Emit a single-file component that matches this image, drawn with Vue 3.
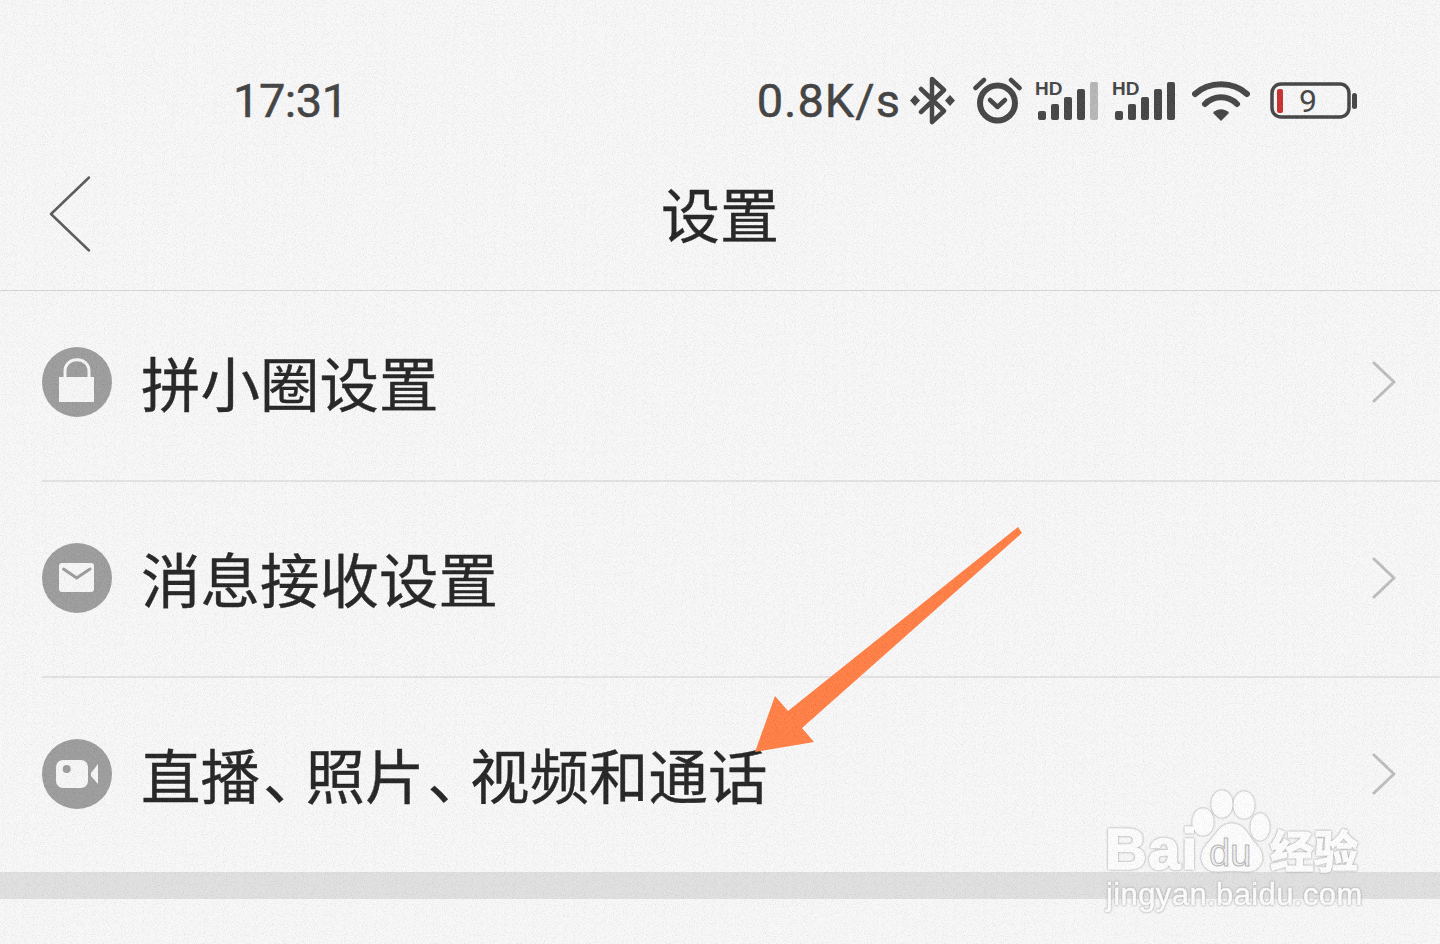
<script setup>
const signals = [
  { id: 'sig-1', weak: true },
  { id: 'sig-2', weak: false },
]
const bars = [
  { x: 3, h: 9 },
  { x: 16, h: 16 },
  { x: 29, h: 23 },
  { x: 42, h: 31 },
  { x: 55, h: 38 },
]
// the list label is split on the enumeration comma, which sits tighter than a full cell
const rows = [
  { id: 'circle', parts: ['拼小圈设置'] },
  { id: 'message', parts: ['消息接收设置'] },
  { id: 'live', parts: ['直播', '照片', '视频和通话'] },
]
</script>

<template>
  <div class="page">
    <div class="status">
      <span class="time">17:31</span>
      <div class="status-right">
        <span class="speed">0.8K/s</span>
        <svg class="ic-bt" width="45" height="49" viewBox="0 0 45 49">
          <path d="M11 13 L34 35 L22 46 V3 L34 14 L11 36" fill="none" stroke="#3e3e3e" stroke-width="4.5" stroke-linejoin="round" stroke-linecap="round" />
          <path d="M5 19 L10 24.500 L5 30 L0 24.500 Z M40 19 L45 24.500 L40 30 L35 24.500 Z" fill="#3e3e3e" />
        </svg>
        <svg class="ic-alarm" width="49" height="47" viewBox="0 0 49 47">
          <circle cx="24.500" cy="26" r="17.500" fill="none" stroke="#3e3e3e" stroke-width="6" />
          <path d="M17 23 L24.500 30 L32 23" fill="none" stroke="#3e3e3e" stroke-width="4.500" stroke-linecap="round" stroke-linejoin="round" />
          <path d="M2.500 11 L11 3 M38 3 L46.500 11" fill="none" stroke="#3e3e3e" stroke-width="4.500" stroke-linecap="round" />
        </svg>
        <svg v-for="s in signals" :key="s.id" class="ic-signal" width="64" height="40" viewBox="0 0 64 40">
          <text x="0" y="15" class="hd">HD</text>
          <rect
            v-for="(b, i) in bars"
            :key="i"
            :x="b.x"
            :y="40 - b.h"
            width="8"
            :height="b.h"
            rx="2"
            :fill="s.weak && i === 4 ? '#b4b4b4' : '#3e3e3e'"
          />
        </svg>
        <svg class="ic-wifi" width="58" height="41" viewBox="0 0 58 41">
          <path d="M3 14 C17 1 41 1 55 14" fill="none" stroke="#3e3e3e" stroke-width="6" stroke-linecap="round" />
          <path d="M13 24 C22 15 36 15 45 24" fill="none" stroke="#3e3e3e" stroke-width="6" stroke-linecap="round" />
          <path d="M21 33 C25 28 33 28 37 33 L29 41 Z" fill="#3e3e3e" />
        </svg>
        <svg class="ic-battery" width="87" height="37" viewBox="0 0 87 37">
          <rect x="2" y="2" width="77" height="33" rx="9" fill="none" stroke="#3e3e3e" stroke-width="3.500" />
          <rect x="7" y="7" width="6" height="24" rx="2" fill="#c62828" />
          <text x="29" y="30" class="batt">9</text>
          <rect x="82" y="11" width="5" height="16" rx="2.500" fill="#3e3e3e" />
        </svg>
      </div>
    </div>

    <header class="nav">
      <svg class="back" width="42" height="76" viewBox="0 0 42 76">
        <path d="M40 1.500 L2 38 L40 74.500" fill="none" stroke="#555" stroke-width="2.500" stroke-linecap="round" stroke-linejoin="round" />
      </svg>
      <h1 class="title">设置</h1>
      <span></span>
    </header>

    <ul class="list">
      <li v-for="row in rows" :key="row.id" class="row">
        <span class="badge">
          <svg v-if="row.id === 'circle'" width="70" height="70" viewBox="0 0 70 70">
            <path d="M23 32 V24 C23 9 47 9 47 24 V32" fill="none" stroke="#f6f6f6" stroke-width="3" />
            <rect x="17" y="30" width="35" height="25" fill="#f6f6f6" />
          </svg>
          <svg v-else-if="row.id === 'message'" width="70" height="70" viewBox="0 0 70 70">
            <rect x="17" y="20" width="35" height="29" rx="3" fill="#f6f6f6" />
            <path d="M21.500 26 L34.700 35 L48 26" fill="none" stroke="#999" stroke-width="3" stroke-linecap="round" />
          </svg>
          <svg v-else width="70" height="70" viewBox="0 0 70 70">
            <rect x="14" y="21" width="32" height="28" rx="7" fill="#f6f6f6" />
            <circle cx="24.700" cy="30" r="4" fill="#999" />
            <path d="M49 34 L56 25 V45 L49 37 Z" fill="#f6f6f6" />
          </svg>
        </span>
        <span class="label">
          <template v-for="(part, i) in row.parts" :key="i">
            <span v-if="i > 0" class="comma">、</span>{{ part }}
          </template>
        </span>
        <svg class="more" width="24" height="42" viewBox="0 0 24 42">
          <path d="M2 2 L22 21 L2 40" fill="none" stroke="#bbb" stroke-width="3" stroke-linecap="round" stroke-linejoin="round" />
        </svg>
      </li>
    </ul>

    <div class="band"></div>

    <svg class="arrow" width="1440" height="944" viewBox="0 0 1440 944">
      <polygon points="1018,527 1022,533 802,728 814,742 755,752 775,696 788,711" fill="#ff7a3d" />
    </svg>

    <svg class="mark" width="1440" height="944" viewBox="0 0 1440 944">
      <g class="mark-solid">
        <ellipse cx="1203" cy="822" rx="10" ry="13" />
        <ellipse cx="1222" cy="804" rx="10" ry="13" />
        <ellipse cx="1244" cy="805" rx="10" ry="13" />
        <ellipse cx="1260" cy="827" rx="9" ry="13" />
        <path d="M1232 824 C1245 824 1248 838 1256 845 C1268 858 1260 872 1245 871 C1236 870 1228 870 1219 871 C1204 872 1196 858 1207 845 C1215 838 1219 824 1232 824 Z" />
        <text x="1105" y="869" class="mark-big">Bai</text>
        <text x="1270" y="868" class="mark-cn">经验</text>
        <text x="1106" y="905" class="mark-url">jingyan.baidu.com</text>
      </g>
      <text x="1209" y="866" class="mark-du">du</text>
    </svg>

    <svg class="grain" width="1440" height="944">
      <filter id="grain-noise" x="0" y="0" width="100%" height="100%" color-interpolation-filters="sRGB">
        <feTurbulence type="fractalNoise" baseFrequency="1.1" numOctaves="1" seed="4" />
        <feColorMatrix type="matrix" values="3 0 0 0 -0.6  3 0 0 0 -0.6  3 0 0 0 -0.6  0 0 0 0 0.07" />
      </filter>
      <rect width="1440" height="944" filter="url(#grain-noise)" />
    </svg>
  </div>
</template>

<style>
body {
  margin: 0;
  background: #f7f7f7;
}
</style>

<style scoped>
.page {
  position: relative;
  width: 1440px;
  height: 944px;
  overflow: hidden;
  background: #f7f7f7;
  font-family: "Noto Sans CJK SC", "Noto Sans", sans-serif;
  color: #1c1c1c;
}
.status {
  display: flex;
  align-items: center;
  justify-content: space-between;
  height: 80px;
  padding: 60px 83px 0 233px;
  color: #3a3a3a;
}
.time,
.speed {
  font-family: Roboto, "Noto Sans", sans-serif;
  font-size: 47px;
  line-height: 1;
  -webkit-text-stroke: 0.5px #3a3a3a;
}
.time {
  letter-spacing: -0.5px;
}
.speed {
  letter-spacing: 1px;
}
.status-right {
  display: flex;
  align-items: center;
}
.ic-bt { margin-left: 9px; }
.ic-alarm { margin-left: 18px; }
.ic-signal {
  margin-left: 13px;
  overflow: visible;
}
.ic-signal:first-of-type { margin-left: 14px; }
.ic-wifi { margin-left: 16px; }
.ic-battery { margin-left: 20px; }
.hd {
  font-family: "Liberation Sans", sans-serif;
  font-size: 19px;
  font-weight: 700;
  fill: #3e3e3e;
}
.batt {
  font-family: Roboto, sans-serif;
  font-size: 32px;
  fill: #3e3e3e;
}
.nav {
  display: grid;
  grid-template-columns: 1fr auto 1fr;
  align-items: center;
  height: 151px;
  padding: 0 49px 2px;
  border-bottom: 1px solid #d4d4d4;
  box-sizing: border-box;
}
.title {
  margin: 0;
  padding-bottom: 4px;
  font-size: 59px;
  font-weight: 400;
  line-height: 1;
  color: #1c1c1c;
  -webkit-text-stroke: 0.4px #1c1c1c;
}
.list {
  list-style: none;
  margin: 0;
  padding: 0 0 0 42px;
}
.row {
  display: flex;
  align-items: center;
  height: 196px;
  padding: 0 44px 2px 0;
  border-bottom: 2px solid #e2e2e2;
  box-sizing: border-box;
}
.row:first-child {
  height: 191px;
  padding-bottom: 7px;
}
.row:last-child {
  height: 194px;
  border-bottom: 0;
}
.badge {
  display: flex;
  flex: none;
  width: 70px;
  height: 70px;
  border-radius: 50%;
  background: #999;
}
.label {
  flex: 1;
  margin-left: 29px;
  font-size: 59.5px;
  line-height: 1;
  white-space: nowrap;
  -webkit-text-stroke: 0.4px #1c1c1c;
}
.comma {
  margin-left: 3px;
  letter-spacing: -17px;
}
.more {
  flex: none;
}
.band {
  height: 27px;
  background: #dfdfdf;
}
.arrow,
.mark,
.grain {
  position: absolute;
  left: 0;
  top: 0;
  pointer-events: none;
}
.mark-solid {
  fill: #fdfdfd;
  stroke: #fdfdfd;
  stroke-width: 1.5;
  filter: drop-shadow(0 0 1px #8f8f8f);
}
.mark-big,
.mark-du,
.mark-cn,
.mark-url {
  font-family: "Liberation Sans", "Noto Sans CJK SC", sans-serif;
}
.mark-big {
  font-size: 58px;
  font-weight: 700;
  letter-spacing: 1px;
}
.mark-du {
  font-size: 38px;
  fill: #f2f2f2;
  stroke: #b4b4b4;
  stroke-width: 1;
}
.mark-cn {
  font-family: "Noto Sans CJK SC", sans-serif;
  font-size: 44px;
  font-weight: 700;
}
.mark-url {
  font-size: 31px;
  stroke-width: 0.5;
  letter-spacing: 0.4px;
}
</style>
